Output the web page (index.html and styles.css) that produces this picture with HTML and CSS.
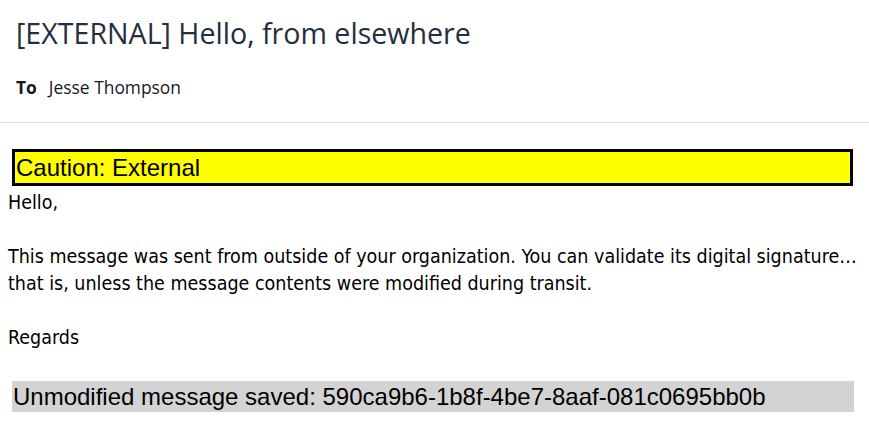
FILE: index.html
```html
<!DOCTYPE html>
<html>
<head>
<meta charset="utf-8">
<link rel="stylesheet" href="styles.css">
</head>
<body>
<div class="header">
  <h1 class="subject">[EXTERNAL] Hello, from elsewhere</h1>
  <div class="recipients"><span class="label">To</span><span class="name">Jesse Thompson</span></div>
</div>
<div class="message">
  <div class="caution">Caution: External</div>
  <div class="text">
    <p class="line">Hello,</p>
    <p class="line">&nbsp;</p>
    <p class="line">This message was sent from outside of your organization. You can validate its digital signature…</p>
    <p class="line">that is, unless the message contents were modified during transit.</p>
    <p class="line">&nbsp;</p>
    <p class="line">Regards</p>
  </div>
  <div class="saved">Unmodified message saved: 590ca9b6-1b8f-4be7-8aaf-081c0695bb0b</div>
</div>
</body>
</html>
```
FILE: styles.css
```css
html, body {
  margin: 0;
  padding: 0;
  background: #ffffff;
}
body {
  width: 869px;
  height: 432px;
  overflow: hidden;
  font-family: "Open Sans", sans-serif;
  color: #16191f;
}
.header {
  padding: 14px 16px 0 16px;
  border-bottom: 1px solid #dcdcdc;
  box-sizing: border-box;
  height: 123px;
}
.subject {
  margin: 0;
  font-size: 28.6px;
  font-weight: 400;
  line-height: 38px;
  color: #232f3e;
}
.recipients {
  margin-top: 24px;
  font-size: 17.4px;
  line-height: 22px;
  display: flex;
  gap: 12px;
}
.label {
  font-weight: 700;
}
.message {
  padding: 26px 8px 0 8px;
  color: #000;
}
.caution {
  margin: 0 8px 0 4px;
  border: 3px solid #000;
  background: #ffff00;
  font-family: "Liberation Sans", Arial, sans-serif;
  font-size: 24px;
  line-height: 31px;
  padding: 0 1px;
}
.text {
  padding-top: 3px;
  font-family: "DejaVu Sans Condensed", "DejaVu Sans", sans-serif;
  font-stretch: condensed;
}
.line {
  margin: 0;
  font-size: 19.5px;
  line-height: 27px;
}
.saved {
  margin: 30px 7px 0 4px;
  background: #d3d3d3;
  font-family: "Liberation Sans", Arial, sans-serif;
  font-size: 24px;
  line-height: 31px;
  padding: 0 1px;
}
```
